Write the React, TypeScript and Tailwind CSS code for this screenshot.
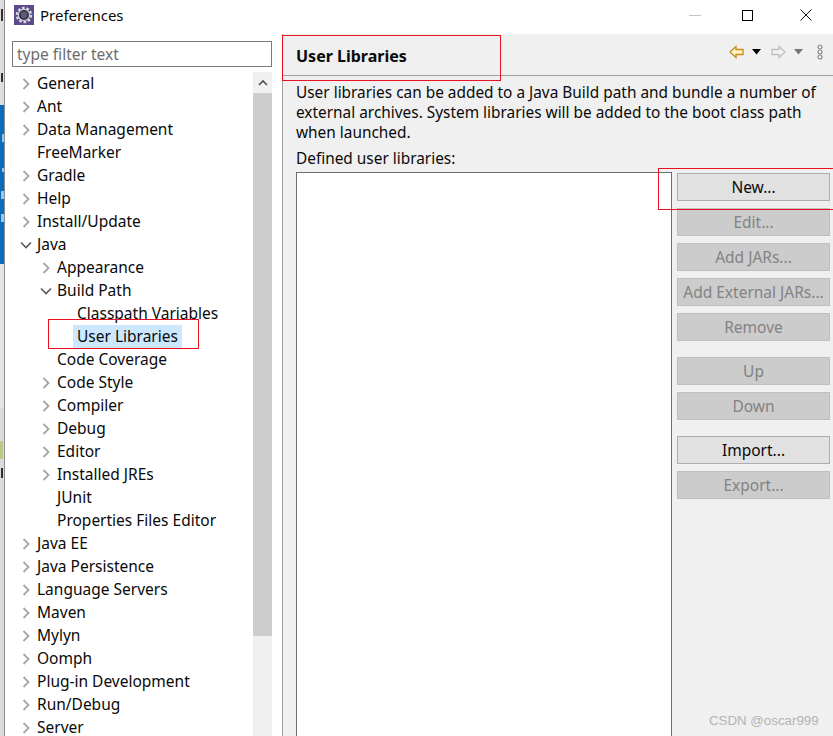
const tree: { label: string; level: number; arrow?: 'closed' | 'open'; selected?: boolean }[] = [
  { label: 'General', level: 0, arrow: 'closed' },
  { label: 'Ant', level: 0, arrow: 'closed' },
  { label: 'Data Management', level: 0, arrow: 'closed' },
  { label: 'FreeMarker', level: 0 },
  { label: 'Gradle', level: 0, arrow: 'closed' },
  { label: 'Help', level: 0, arrow: 'closed' },
  { label: 'Install/Update', level: 0, arrow: 'closed' },
  { label: 'Java', level: 0, arrow: 'open' },
  { label: 'Appearance', level: 1, arrow: 'closed' },
  { label: 'Build Path', level: 1, arrow: 'open' },
  { label: 'Classpath Variables', level: 2 },
  { label: 'User Libraries', level: 2, selected: true },
  { label: 'Code Coverage', level: 1 },
  { label: 'Code Style', level: 1, arrow: 'closed' },
  { label: 'Compiler', level: 1, arrow: 'closed' },
  { label: 'Debug', level: 1, arrow: 'closed' },
  { label: 'Editor', level: 1, arrow: 'closed' },
  { label: 'Installed JREs', level: 1, arrow: 'closed' },
  { label: 'JUnit', level: 1 },
  { label: 'Properties Files Editor', level: 1 },
  { label: 'Java EE', level: 0, arrow: 'closed' },
  { label: 'Java Persistence', level: 0, arrow: 'closed' },
  { label: 'Language Servers', level: 0, arrow: 'closed' },
  { label: 'Maven', level: 0, arrow: 'closed' },
  { label: 'Mylyn', level: 0, arrow: 'closed' },
  { label: 'Oomph', level: 0, arrow: 'closed' },
  { label: 'Plug-in Development', level: 0, arrow: 'closed' },
  { label: 'Run/Debug', level: 0, arrow: 'closed' },
  { label: 'Server', level: 0, arrow: 'closed' },
];

function Chevron({ open }: { open: boolean }) {
  return (
    <svg width="12" height="12" viewBox="0 0 12 12" fill="none" className="shrink-0">
      {open ? (
        <path d="M1 3.5 L6 8.5 L11 3.5" stroke="#595959" strokeWidth="1.6" />
      ) : (
        <path d="M3.5 1 L8.5 6 L3.5 11" stroke="#a6a6a6" strokeWidth="1.8" />
      )}
    </svg>
  );
}

function TreeRow({ item }: { item: (typeof tree)[number] }) {
  const indent = item.level === 0 ? 'pl-[14px]' : item.level === 1 ? 'pl-[34px]' : 'pl-[54px]';
  return (
    <div className={`flex h-[23px] shrink-0 items-center whitespace-nowrap ${indent}`}>
      <div className="flex w-[14px] shrink-0 justify-center">
        {item.arrow && <Chevron open={item.arrow === 'open'} />}
      </div>
      <span className={`flex h-[23px] items-center px-[4px] pt-[1px] ${item.selected ? 'bg-[#cce8ff]' : ''}`}>
        {item.label}
      </span>
    </div>
  );
}

function Btn({ label, enabled, className = '' }: { label: string; enabled?: boolean; className?: string }) {
  return (
    <div
      className={`flex h-[28px] items-center justify-center whitespace-nowrap border pt-[1px] ${
        enabled
          ? 'border-[#adadad] bg-[#e1e1e1] text-[#0a0a0a]'
          : 'border-[#bfbfbf] bg-[#cccccc] text-[#838383]'
      } ${className}`}
    >
      {label}
    </div>
  );
}

function GearIcon() {
  return (
    <svg width="20" height="20" viewBox="0 0 20 20" className="shrink-0">
      <rect width="20" height="20" fill="#5a4a8c" />
      <circle cx="10" cy="10" r="7" fill="none" stroke="#d8d8dc" strokeWidth="2.6" strokeDasharray="2.6 1.8" />
      <circle cx="10" cy="10" r="5.6" fill="#2f2a45" stroke="#c9c9d2" strokeWidth="1.2" />
      <circle cx="10" cy="10" r="3.4" fill="#5b5a72" />
    </svg>
  );
}

function BackArrow() {
  return (
    <svg width="15" height="14" viewBox="0 0 15 14">
      <path d="M1 7 L7 1.5 V4.5 H14 V9.5 H7 V12.5 Z" fill="#fff3c4" stroke="#c98a1e" strokeWidth="1.3" />
    </svg>
  );
}

function ForwardArrow() {
  return (
    <svg width="15" height="14" viewBox="0 0 15 14">
      <path d="M14 7 L8 1.5 V4.5 H1 V9.5 H8 V12.5 Z" fill="#f4f4f4" stroke="#bdbdbd" strokeWidth="1.3" />
    </svg>
  );
}

function Caret({ color }: { color: string }) {
  return (
    <svg width="9" height="6" viewBox="0 0 9 6">
      <path d="M0 0 H9 L4.5 5.5 Z" fill={color} />
    </svg>
  );
}

function MenuDots() {
  return (
    <svg width="6" height="16" viewBox="0 0 6 16" fill="none" stroke="#8a8a8a" strokeWidth="1.2">
      <circle cx="3" cy="3" r="2" />
      <circle cx="3" cy="8" r="2" />
      <circle cx="3" cy="13" r="2" />
    </svg>
  );
}

export default function App() {
  return (
    <div
      className="relative flex h-[736px] w-[833px] overflow-hidden bg-white text-[15.5px] text-[#0a0a0a]"
      style={{ fontFamily: '"Noto Sans", sans-serif' }}
    >
      {/* bit of the desktop behind the window */}
      <div className="relative flex w-[5px] shrink-0 flex-col overflow-hidden border-r border-[#8c8c8c]">
        <div className="h-[105px] shrink-0 bg-[#dedede]" />
        <div className="h-[159px] shrink-0 bg-[#0a6cbd]" />
        <div className="h-[144px] shrink-0 bg-[#e6e6e6]" />
        <div className="flex-1 bg-[#dcdcdc]" />
        <div className="absolute left-[1px] top-[9px] h-[12px] w-[2px] bg-[#3a3026]" />
        <div className="absolute left-[1px] top-[73px] h-[9px] w-[2px] bg-[#26303a]" />
        <div className="absolute left-[2px] top-[134px] h-[8px] w-[2px] bg-[#9cc6e8]" />
        <div className="absolute left-[2px] top-[168px] h-[4px] w-[2px] bg-[#9cc6e8]" />
        <div className="absolute left-[1px] top-[191px] h-[8px] w-[3px] bg-[#9cc6e8]" />
        <div className="absolute left-[1px] top-[214px] h-[8px] w-[3px] bg-[#9cc6e8]" />
        <div className="absolute left-0 top-[441px] h-[18px] w-[3px] bg-[#b9c98a]" />
        <div className="absolute left-[1px] top-[468px] h-[10px] w-[2px] bg-[#26303a]" />
      </div>

      <div className="flex min-w-0 flex-1 flex-col">
        {/* title bar */}
        <div className="flex h-[34px] shrink-0 items-center bg-white pb-[4px] pl-[9px]">
          <GearIcon />
          <span className="ml-[6px] text-[15px]">Preferences</span>
          <div className="ml-auto flex items-center">
            <div className="mr-[41px] h-px w-[12px] bg-[#c4c4c4]" />
            <div className="mr-[47px] h-[11px] w-[11px] border border-black" />
            <svg width="12" height="12" viewBox="0 0 12 12" className="mr-[21px]">
              <path d="M0.5 0.5 L11.5 11.5 M11.5 0.5 L0.5 11.5" stroke="#111" strokeWidth="1" />
            </svg>
          </div>
        </div>

        <div className="flex min-h-0 flex-1">
          {/* left pane */}
          <div className="flex w-[267px] shrink-0 flex-col bg-white pt-[7px]">
            <div className="ml-[7px] flex h-[26px] shrink-0 items-center border border-[#7a7a7a] pl-[4px] pt-[2px] text-[#6d6d6d]">
              type filter text
            </div>
            <div className="mt-[5px] flex min-h-0 flex-1">
              <div className="min-w-0 flex-1 overflow-hidden">
                {tree.map((item) => (
                  <TreeRow key={item.label} item={item} />
                ))}
              </div>
              <div className="flex w-[19px] shrink-0 flex-col bg-[#f0f0f0]">
                <div className="flex h-[21px] shrink-0 items-center justify-center">
                  <svg width="10" height="7" viewBox="0 0 10 7" fill="none">
                    <path d="M1 6 L5 2 L9 6" stroke="#505050" strokeWidth="1.6" />
                  </svg>
                </div>
                <div className="h-[543px] shrink-0 bg-[#cdcdcd]" />
              </div>
            </div>
          </div>

          {/* right pane */}
          <div className="ml-[10px] flex min-w-0 flex-1 flex-col border-l border-[#a0a0a0] bg-[#f0f0f0]">
            <div className="flex h-[42px] shrink-0 items-center border-b border-[#a0a0a0] pl-[13px] pr-[10px]">
              <span className="mt-[2px] text-[16px] font-bold">User Libraries</span>
              <div className="mb-[6px] ml-auto flex items-center">
                <BackArrow />
                <div className="ml-[8px]">
                  <Caret color="#000" />
                </div>
                <div className="ml-[10px]">
                  <ForwardArrow />
                </div>
                <div className="ml-[8px]">
                  <Caret color="#777" />
                </div>
                <div className="ml-[14px]">
                  <MenuDots />
                </div>
              </div>
            </div>
            <div className="flex min-h-0 flex-1 flex-col pl-[13px]">
              <p className="mt-[7px] whitespace-nowrap text-[15.4px] leading-[20px]">
                User libraries can be added to a Java Build path and bundle a number of
                <br />
                external archives. System libraries will be added to the boot class path
                <br />
                when launched.
              </p>
              <div className="mt-[6px] text-[15.4px] leading-[20px]">Defined user libraries:</div>
              <div className="mt-[3px] flex min-h-0 flex-1">
                <div className="w-[376px] shrink-0 border border-b-0 border-[#6e6e6e] bg-white" />
                <div className="ml-[5px] flex w-[153px] shrink-0 flex-col pt-[1px]">
                  <Btn label="New..." enabled />
                  <Btn label="Edit..." className="mt-[7px]" />
                  <Btn label="Add JARs..." className="mt-[7px]" />
                  <Btn label="Add External JARs..." className="mt-[7px]" />
                  <Btn label="Remove" className="mt-[7px]" />
                  <Btn label="Up" className="mt-[16px]" />
                  <Btn label="Down" className="mt-[7px]" />
                  <Btn label="Import..." enabled className="mt-[16px]" />
                  <Btn label="Export..." className="mt-[7px]" />
                </div>
              </div>
            </div>
          </div>
        </div>
      </div>

      {/* annotations drawn on top of the screenshot */}
      <div className="absolute left-[48px] top-[319px] h-[30px] w-[151px] border border-[#e81123]" />
      <div className="absolute left-[282px] top-[35px] h-[46px] w-[219px] border border-[#e81123]" />
      <div className="absolute left-[658px] top-[168px] h-[42px] w-[180px] border border-[#e81123]" />
      <div
        className="absolute left-[709px] top-[713px] text-[13.3px] leading-[16px] text-[#b4b4b4]"
        style={{ fontFamily: '"Liberation Sans", sans-serif' }}
      >
        CSDN @oscar999
      </div>
    </div>
  );
}
